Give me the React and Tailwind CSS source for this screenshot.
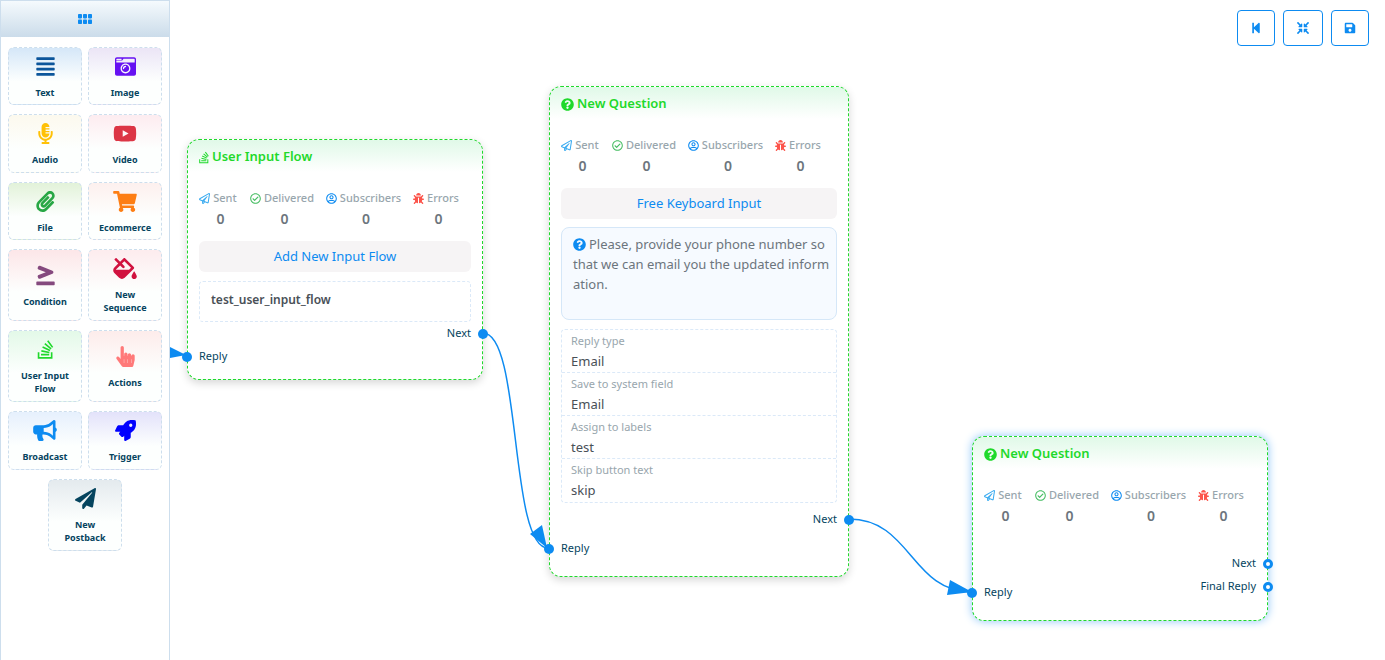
import React from "react";
import {
  FaAlignJustify,
  FaBug,
  FaBullhorn,
  FaCameraRetro,
  FaCompressArrowsAlt,
  FaFillDrip,
  FaGreaterThanEqual,
  FaHandPointer,
  FaMicrophoneAlt,
  FaPaperclip,
  FaPaperPlane,
  FaQuestionCircle,
  FaRegCheckCircle,
  FaRegPaperPlane,
  FaRegUserCircle,
  FaRocket,
  FaSave,
  FaShoppingCart,
  FaStackOverflow,
  FaStepBackward,
  FaYoutube,
} from "react-icons/fa";

const tiles = [
  { label: "Text", Icon: FaAlignJustify, color: "text-[#0b559b]", tint: "from-[#d5e7f8]", size: "h-[58px]" },
  { label: "Image", Icon: FaCameraRetro, color: "text-[#6610f2]", tint: "from-[#ebe5f6]", size: "h-[58px]" },
  { label: "Audio", Icon: FaMicrophoneAlt, color: "text-[#ffc107]", tint: "from-[#fcf9ee]", size: "h-[59px]" },
  { label: "Video", Icon: FaYoutube, wide: true, color: "text-[#dc3545]", tint: "from-[#fdecf0]", size: "h-[59px]" },
  { label: "File", Icon: FaPaperclip, color: "text-[#28a745]", tint: "from-[#e2f2d9]", size: "h-[58px]" },
  { label: "Ecommerce", Icon: FaShoppingCart, wide: true, color: "text-[#fd7e14]", tint: "from-[#fdf0ee]", size: "h-[58px]" },
  { label: "Condition", Icon: FaGreaterThanEqual, color: "text-[#85497e]", tint: "from-[#fce6e8]", size: "h-[72px]" },
  { label: "New Sequence", Icon: FaFillDrip, wide: true, color: "text-[#d1123f]", tint: "from-[#fdecee]", size: "h-[72px]" },
  { label: "User Input Flow", Icon: FaStackOverflow, color: "text-[#1fd92b]", tint: "from-[#e3f9e8]", size: "h-[72px]" },
  { label: "Actions", Icon: FaHandPointer, color: "text-[#ff7979]", tint: "from-[#fdeceb]", size: "h-[72px]" },
  { label: "Broadcast", Icon: FaBullhorn, wide: true, color: "text-[#0d8bf1]", tint: "from-[#e6f0fd]", size: "h-[59px]" },
  { label: "Trigger", Icon: FaRocket, color: "text-[#0000ff]", tint: "from-[#e3e2fa]", size: "h-[59px]" },
  { label: "New Postback", Icon: FaPaperPlane, color: "text-[#05445e]", tint: "from-[#e4eaee]", size: "h-[72px]" },
];

function Sidebar() {
  return (
    <aside className="z-10 flex w-[170px] shrink-0 flex-col border-x border-[#cddeed] bg-white">
      <div className="flex h-[37px] items-center justify-center border-t border-[#cddeed] bg-linear-to-b from-[#f5fafd] to-[#cbdcea]">
        <svg width="14" height="10" viewBox="0 0 14 10" fill="#0d8bf1" aria-hidden="true">
          <rect x="0" y="0" width="4" height="4.4" rx="0.8" />
          <rect x="5" y="0" width="4" height="4.4" rx="0.8" />
          <rect x="10" y="0" width="4" height="4.4" rx="0.8" />
          <rect x="0" y="5.6" width="4" height="4.4" rx="0.8" />
          <rect x="5" y="5.6" width="4" height="4.4" rx="0.8" />
          <rect x="10" y="5.6" width="4" height="4.4" rx="0.8" />
        </svg>
      </div>
      <div className="flex flex-wrap justify-center gap-x-[6px] gap-y-[9px] px-[7px] pt-[10px]">
        {tiles.map(({ label, Icon, wide, color, tint, size }) => (
          <button
            key={label}
            type="button"
            className={`flex w-[74px] flex-col items-center justify-center gap-[9px] rounded-[6px] border border-dashed border-[#cddeed] bg-linear-to-b ${tint} to-[#fdfffe] to-60% px-2 pt-[2px] ${size}`}
          >
            <Icon className={`h-[21px] shrink-0 ${wide ? "w-[24px]" : "w-[21px]"} ${color}`} />
            <span className="text-[9px] leading-[13px] font-bold text-[#05445e]">{label}</span>
          </button>
        ))}
      </div>
    </aside>
  );
}

const stats = [
  { label: "Sent", Icon: FaRegPaperPlane, color: "text-[#3aabf0]" },
  { label: "Delivered", Icon: FaRegCheckCircle, color: "text-[#47bd63]" },
  { label: "Subscribers", Icon: FaRegUserCircle, color: "text-[#0d8bf1]" },
  { label: "Errors", Icon: FaBug, color: "text-[#fc544b]" },
];

function Stats() {
  return (
    <dl className="mt-[14px] grid grid-cols-[38px_64px_73px_46px] gap-x-[13px] pb-[11px]">
      {stats.map(({ label, Icon, color }) => (
        <div key={label} className="flex flex-col items-center">
          <dt className="flex h-[20px] items-center gap-[3px] text-[11px] font-medium whitespace-nowrap text-[#98a6ad]">
            <Icon className={`size-[11px] shrink-0 ${color}`} />
            {label}
          </dt>
          <dd className="h-[22px] pl-[5px] text-[14px] leading-[22px] font-semibold text-[#6c757d]">0</dd>
        </div>
      ))}
    </dl>
  );
}

function Node({ title, Icon, iconSize, className, selected, children }) {
  return (
    <section
      className={`absolute rounded-[12px] border border-dashed border-[#1fd92b] bg-white bg-linear-to-b from-[#e0f9e8] to-white to-[32px] px-[11px] ${
        selected ? "shadow-[0_0_10px_#8cc5f8]" : "shadow-[0_3px_8px_rgba(0,0,0,0.16)]"
      } ${className}`}
    >
      <h2 className="flex h-[34px] items-center gap-[3px] text-[13px] font-semibold text-[#1fd92b]">
        <Icon className={`shrink-0 ${iconSize}`} />
        {title}
      </h2>
      <Stats />
      {children}
    </section>
  );
}

function Port({ label, side, open }) {
  const right = side === "right";
  return (
    <div className={`relative flex h-[23px] items-center text-[11px] text-[#05445e] ${right ? "justify-end" : ""}`}>
      {label}
      <span
        className={`absolute size-[10px] rounded-full ${right ? "-right-[17px]" : "-left-[17px]"} ${
          open ? "border-[3px] border-[#0d8bf1] bg-white" : "bg-[#0d8bf1]"
        }`}
      />
    </div>
  );
}

function NodeButton({ children }) {
  return (
    <button
      type="button"
      className="block h-[31px] w-full rounded-[6px] bg-[#f6f4f5] text-center text-[13px] text-[#0d8bf1]"
    >
      {children}
    </button>
  );
}

const fields = [
  ["Reply type", "Email"],
  ["Save to system field", "Email"],
  ["Assign to labels", "test"],
  ["Skip button text", "skip"],
];

function Connections() {
  return (
    <svg className="pointer-events-none absolute inset-0 size-full" aria-hidden="true">
      <g fill="none" stroke="#0d8bf1" strokeWidth="1.5">
        <path d="M313 333 C 352 333 339 548 378 548" />
        <path d="M679 519 C 741 519 741 592 802 592" />
      </g>
      <g fill="#0d8bf1">
        <path d="M0 347 L16 355 L0 358 Z" />
        <path d="M360 534 L372 525 L377 548 Z" />
        <path d="M780 580 L802 592 L777 595 Z" />
      </g>
    </svg>
  );
}

function Toolbar() {
  const style = "flex h-[36px] items-center justify-center rounded-[4px] border border-[#0d8bf1] bg-white text-[#0d8bf1]";
  return (
    <div className="absolute top-[10px] right-4 flex gap-2">
      <button type="button" aria-label="Back" className={`w-[38px] ${style}`}>
        <FaStepBackward className="size-[12px]" />
      </button>
      <button type="button" aria-label="Fit to screen" className={`w-[40px] ${style}`}>
        <FaCompressArrowsAlt className="size-[12px]" />
      </button>
      <button type="button" aria-label="Save" className={`w-[38px] ${style}`}>
        <FaSave className="size-[12px]" />
      </button>
    </div>
  );
}

export default function App() {
  return (
    <div className="flex h-screen overflow-hidden bg-white font-['Noto_Sans','Open_Sans',sans-serif]">
      <Sidebar />
      <main className="relative min-w-0 flex-1 overflow-hidden">
        <Node
          title="User Input Flow"
          Icon={FaStackOverflow}
          iconSize="h-[13px] w-[10px]"
          className="top-[139px] left-[17px] w-[296px] pb-[11px]"
        >
          <NodeButton>Add New Input Flow</NodeButton>
          <div className="mt-[9px] flex h-[41px] items-center rounded-[4px] border border-dashed border-[#dbe9f8] px-[11px] pb-[3px] text-[12px] font-semibold text-[#495057]">
            test_user_input_flow
          </div>
          <Port label="Next" side="right" />
          <Port label="Reply" side="left" />
        </Node>

        <Node
          title="New Question"
          Icon={FaQuestionCircle}
          iconSize="size-[13px]"
          className="top-[86px] left-[379px] w-[300px] pb-[16px]"
        >
          <NodeButton>Free Keyboard Input</NodeButton>
          <p className="mt-[8px] h-[93px] rounded-[8px] border border-[#d5e7f8] bg-[#f6faff] pt-[6px] pr-[5px] pl-[11px] text-[13px] leading-[20px] break-all text-[#6c757d]">
            <FaQuestionCircle className="mr-[3px] inline size-[13px] align-[-2px] text-[#0d8bf1]" />
            Please, provide your phone number so that we can email you the updated information.
          </p>
          <dl className="mt-[9px] rounded-[4px] border border-dashed border-[#dbe9f8]">
            {fields.map(([name, value]) => (
              <div key={name} className="h-[43px] border-b border-dashed border-[#dbe9f8] px-[9px] pt-[1px] last:border-b-0">
                <dt className="text-[11px] leading-[20px] text-[#98a6ad]">{name}</dt>
                <dd className="text-[13px] leading-[20px] text-[#495057]">{value}</dd>
              </div>
            ))}
          </dl>
          <div className="mt-[5px] flex flex-col gap-[6px]">
            <Port label="Next" side="right" />
            <Port label="Reply" side="left" />
          </div>
        </Node>

        <Node
          title="New Question"
          Icon={FaQuestionCircle}
          iconSize="size-[13px]"
          selected
          className="top-[436px] left-[802px] w-[296px] pb-[16px]"
        >
          <div className="mt-[14px] grid grid-cols-2">
            <div className="pt-[29px]">
              <Port label="Reply" side="left" />
            </div>
            <div>
              <Port label="Next" side="right" open />
              <Port label="Final Reply" side="right" open />
            </div>
          </div>
        </Node>

        <Connections />
        <Toolbar />
      </main>
    </div>
  );
}
